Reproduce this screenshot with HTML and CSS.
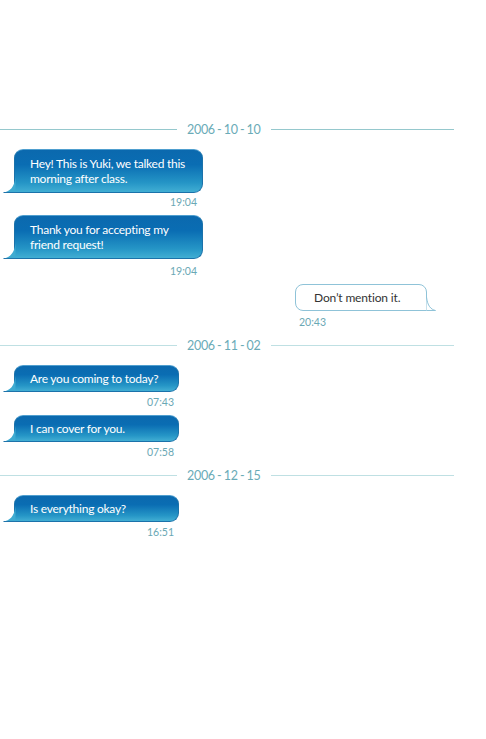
FILE: index.html
```html
<!DOCTYPE html>
<html>
<head>
<meta charset="utf-8">
<link rel="stylesheet" href="styles.css">
</head>
<body>
<div class="chat">
  <div class="date first"><span class="line left"></span><span class="label">2006 - 10 - 10</span><span class="line right"></span></div>

  <div class="msg in">
    <div class="bubble wide"><svg class="tail" viewBox="0 0 13 16" width="13" height="16"><path d="M12.5 0 V15.5 H0.5 C7 14.5 11.5 10 12.5 0 Z" fill="#3fabd1"/><path d="M0.5 15.5 H13" stroke="#1f73aa" stroke-width="1"/></svg>Hey! This is Yuki, we talked this morning after class.</div>
    <div class="time t1">19:04</div>
  </div>

  <div class="msg in">
    <div class="bubble wide"><svg class="tail" viewBox="0 0 13 16" width="13" height="16"><path d="M12.5 0 V15.5 H0.5 C7 14.5 11.5 10 12.5 0 Z" fill="#3fabd1"/><path d="M0.5 15.5 H13" stroke="#1f73aa" stroke-width="1"/></svg>Thank you for accepting my friend request!</div>
    <div class="time t2">19:04</div>
  </div>

  <div class="msg out">
    <div class="bubble white"><svg class="tail-r" viewBox="0 0 10 14" width="10" height="14"><path d="M0.5 0 V13.5 H9.5 C5 12.5 1.5 9 0.5 0 Z" fill="#fff"/><path d="M0.5 13.5 H9.5 C5 12.5 1.5 9 0.5 0" fill="none" stroke="#8fc3d8" stroke-width="1"/></svg>Don’t mention it.</div>
    <div class="time">20:43</div>
  </div>

  <div class="date"><span class="line left"></span><span class="label">2006 - 11 - 02</span><span class="line right"></span></div>

  <div class="msg in">
    <div class="bubble"><svg class="tail" viewBox="0 0 13 16" width="13" height="16"><path d="M12.5 0 V15.5 H0.5 C7 14.5 11.5 10 12.5 0 Z" fill="#3fabd1"/><path d="M0.5 15.5 H13" stroke="#1f73aa" stroke-width="1"/></svg>Are you coming to today?</div>
    <div class="time short">07:43</div>
  </div>

  <div class="msg in">
    <div class="bubble"><svg class="tail" viewBox="0 0 13 16" width="13" height="16"><path d="M12.5 0 V15.5 H0.5 C7 14.5 11.5 10 12.5 0 Z" fill="#3fabd1"/><path d="M0.5 15.5 H13" stroke="#1f73aa" stroke-width="1"/></svg>I can cover for you.</div>
    <div class="time short">07:58</div>
  </div>

  <div class="date"><span class="line left"></span><span class="label">2006 - 12 - 15</span><span class="line right"></span></div>

  <div class="msg in">
    <div class="bubble"><svg class="tail" viewBox="0 0 13 16" width="13" height="16"><path d="M12.5 0 V15.5 H0.5 C7 14.5 11.5 10 12.5 0 Z" fill="#3fabd1"/><path d="M0.5 15.5 H13" stroke="#1f73aa" stroke-width="1"/></svg>Is everything okay?</div>
    <div class="time short">16:51</div>
  </div>
</div>
</body>
</html>
```

FILE: styles.css
```css
html, body {
  margin: 0;
  padding: 0;
  background: #ffffff;
}

body {
  font-family: Lato, "Open Sans", "Liberation Sans", sans-serif;
  width: 486px;
  height: 739px;
  overflow: hidden;
}

.chat {
  width: 454px;
  padding-top: 121px;
  display: flex;
  flex-direction: column;
}

.date {
  display: flex;
  align-items: center;
  height: 16px;
  margin: 2px 0 12px;
}

.date.first {
  margin-top: 0;
}

.date .line {
  height: 1px;
  background: #bfe0e3;
}

.date.first .line {
  background: #95c8cd;
}

.date .line.left {
  width: 177px;
}

.date .line.right {
  flex: 1;
}

.date .label {
  padding: 0 10px;
  font-size: 12.5px;
  color: #6aabb7;
  letter-spacing: -0.3px;
  word-spacing: -0.6px;
  white-space: nowrap;
}

.msg {
  display: flex;
  flex-direction: column;
  margin-bottom: 7px;
}

.msg.in {
  align-items: flex-start;
  padding-left: 14px;
}

.msg.out {
  align-items: flex-end;
  padding-right: 27px;
}

.bubble {
  position: relative;
  box-sizing: border-box;
  width: 165px;
  min-height: 27px;
  padding: 5px 8px 5px 15px;
  font-size: 12px;
  line-height: 15px;
  letter-spacing: -0.25px;
  color: #ffffff;
  background: linear-gradient(to bottom, #0b69ae 0%, #0a6db3 35%, #2595c6 78%, #41aed3 100%);
  border: 1px solid #1b72aa;
  border-top-color: #4f9fcf;
  border-radius: 9px 9px 9px 0;
}

.bubble.wide {
  width: 189px;
  padding-top: 6px;
  padding-bottom: 6px;
}

.bubble .tail {
  position: absolute;
  left: -12px;
  bottom: -1px;
}

.bubble.white {
  width: 132px;
  color: #333333;
  background: #ffffff;
  border: 1px solid #8fc3d8;
  border-radius: 8px 8px 0 8px;
  padding: 5px 10px 5px 18px;
  letter-spacing: -0.15px;
}

.bubble .tail-r {
  position: absolute;
  right: -10px;
  bottom: -1px;
}

.time {
  font-size: 10.5px;
  line-height: 12px;
  color: #6aa8b5;
  margin-top: 4px;
}

.msg.in .time {
  align-self: flex-start;
  width: 183px;
  text-align: right;
}

.msg.in .time.short {
  width: 160px;
}

.time.t1 {
  margin-top: 3px;
}

.time.t2 {
  margin-top: 6px;
}

.msg.out .time {
  align-self: flex-start;
  margin-top: 5px;
  margin-left: 299px;
}
```
